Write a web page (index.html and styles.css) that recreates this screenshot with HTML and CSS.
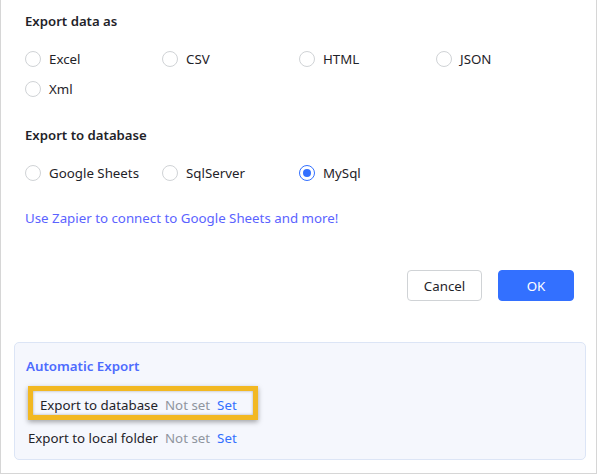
FILE: index.html
```html
<!DOCTYPE html>
<html>
<head>
<meta charset="utf-8">
<link rel="stylesheet" href="styles.css">
</head>
<body>
<div class="frame">
  <div class="heading first">Export data as</div>
  <div class="options">
    <label class="opt"><span class="radio"></span>Excel</label>
    <label class="opt"><span class="radio"></span>CSV</label>
    <label class="opt"><span class="radio"></span>HTML</label>
    <label class="opt"><span class="radio"></span>JSON</label>
    <label class="opt"><span class="radio"></span>Xml</label>
  </div>
  <div class="heading second">Export to database</div>
  <div class="options">
    <label class="opt"><span class="radio"></span>Google Sheets</label>
    <label class="opt"><span class="radio"></span>SqlServer</label>
    <label class="opt"><span class="radio checked"></span>MySql</label>
  </div>
  <a class="zapier">Use Zapier to connect to Google Sheets and more!</a>
  <div class="actions">
    <button class="btn cancel">Cancel</button>
    <button class="btn ok">OK</button>
  </div>
  <div class="panel">
    <div class="panel-title">Automatic Export</div>
    <div class="auto-grid">
      <span class="auto-label">Export to database</span><span class="not-set">Not set</span><a class="set">Set</a>
      <span class="auto-label">Export to local folder</span><span class="not-set">Not set</span><a class="set">Set</a>
    </div>
    <div class="highlight"></div>
  </div>
</div>
</body>
</html>
```
FILE: styles.css
```css
html, body {
  margin: 0;
  padding: 0;
  background: #ffffff;
}
body {
  font-family: "Noto Sans", "Open Sans", sans-serif;
  font-size: 13.3px;
  color: #1f2329;
}
.frame {
  box-sizing: border-box;
  width: 597px;
  height: 474px;
  border: 1px solid #d6d6d6;
  border-top: none;
  padding: 0 22px 0 24px;
}
.heading {
  font-size: 13.2px;
  font-weight: 600;
  line-height: 20px;
  color: #1f2329;
}
.heading.first { padding-top: 11px; }
.heading.second { margin-top: 21px; }
.options {
  display: grid;
  grid-template-columns: repeat(4, 137px);
  grid-auto-rows: 30px;
  margin-top: 13px;
}
.opt {
  display: flex;
  align-items: center;
  gap: 8px;
  line-height: 20px;
}
.radio {
  box-sizing: border-box;
  width: 16px;
  height: 16px;
  border: 1px solid #d0d3d6;
  border-radius: 50%;
  background: #fff;
  display: inline-flex;
  align-items: center;
  justify-content: center;
}
.radio.checked {
  border-color: #3370ff;
}
.radio.checked::after {
  content: "";
  width: 8px;
  height: 8px;
  border-radius: 50%;
  background: #3370ff;
}
.zapier {
  display: block;
  margin-top: 20px;
  line-height: 20px;
  color: #5b63ff;
}
.actions {
  display: flex;
  justify-content: flex-end;
  gap: 16px;
  margin-top: 42px;
}
.btn {
  box-sizing: border-box;
  height: 31px;
  border-radius: 4px;
  font-family: inherit;
  font-size: 13.3px;
  padding: 0;
}
.btn.cancel {
  width: 75px;
  background: #fff;
  border: 1px solid #d0d3d6;
  color: #1f2329;
}
.btn.ok {
  width: 76px;
  background: #3370ff;
  border: 1px solid #3370ff;
  color: #fff;
}
.panel {
  position: relative;
  box-sizing: border-box;
  margin: 41px 0 0 -11px;
  width: 572px;
  height: 118px;
  background: #f5f7fd;
  border: 1px solid #dce5f6;
  border-radius: 5px;
  padding: 13px 11px 0 11px;
}
.panel-title {
  font-weight: 600;
  line-height: 20px;
  color: #4d6bfe;
}
.auto-grid {
  display: grid;
  grid-template-columns: 132px auto auto;
  justify-content: start;
  column-gap: 7px;
  row-gap: 13px;
  margin-top: 19px;
  line-height: 20px;
}
.auto-label {
  text-align: right;
  white-space: nowrap;
  color: #1f2329;
}
.not-set { color: #8f959e; }
.set { color: #3370ff; }
.highlight {
  position: absolute;
  left: 13px;
  top: 43px;
  width: 230px;
  height: 34px;
  box-sizing: border-box;
  border: 5px solid #f2b822;
  box-shadow: 0 2px 5px rgba(0,0,0,0.35), inset 0 0 3px rgba(0,0,0,0.3);
}
```
